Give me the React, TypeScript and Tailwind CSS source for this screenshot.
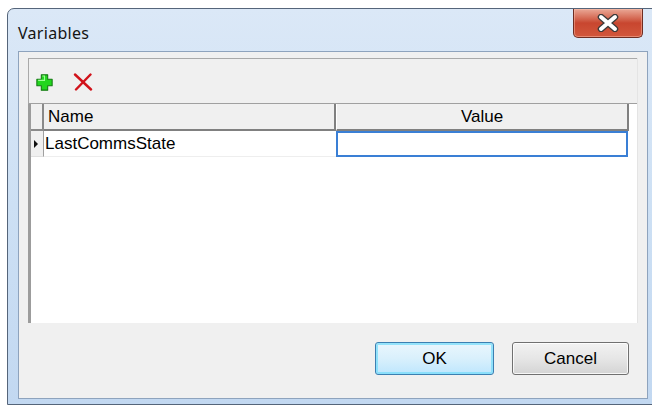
import React from "react";

function AddIcon() {
  return (
    <svg width="17" height="17" viewBox="0 0 16 16">
      <path
        d="M5 0.8h6v4.2h4.2v6h-4.2v4.2h-6v-4.2h-4.2v-6h4.2z"
        fill="#22d61e"
        stroke="#137a12"
        strokeWidth="1"
        strokeLinejoin="round"
      />
      <path d="M6 1.8h2v4.2H2" fill="none" stroke="#9dff96" strokeWidth="1" />
    </svg>
  );
}

function DeleteIcon() {
  return (
    <svg width="22" height="18" viewBox="0 0 22 18">
      <path d="M3 1.5 L19 16.5" stroke="#d1121a" strokeWidth="2.4" strokeLinecap="round" />
      <path d="M18.5 1.5 L4 16.5" stroke="#d1121a" strokeWidth="2.4" strokeLinecap="round" />
    </svg>
  );
}

function CloseGlyph() {
  return (
    <svg width="24" height="18" viewBox="0 0 24 18">
      <path d="M5 3 L19 15 M19 3 L5 15" stroke="#3a3a3a" strokeWidth="6.5" strokeLinecap="round" />
      <path d="M5 3 L19 15 M19 3 L5 15" stroke="#ffffff" strokeWidth="4" strokeLinecap="round" />
    </svg>
  );
}

function RowMarker() {
  return (
    <svg width="6" height="10" viewBox="0 0 6 10">
      <path d="M1 1 L5 5 L1 9 Z" fill="#111" />
    </svg>
  );
}

export default function App() {
  const gridFont = { fontFamily: '"Liberation Sans", Arial, sans-serif' };
  return (
    <div className="w-[652px] h-[405px] bg-white overflow-hidden pl-[7px] pt-[8px]">
      {/* dialog window */}
      <div className="relative w-[652px] h-[397px] flex flex-col border border-[#55657a] rounded-t-[7px] bg-gradient-to-b from-[#dbe8f7] via-[#cde0f4] to-[#c2d8f1]">
        {/* title bar */}
        <div className="h-[42px] shrink-0 flex items-center pl-[10px] pt-[6px]">
          <span
            className="text-[16px] text-[#141414] tracking-[0.3px]"
            style={{ fontFamily: '"Noto Sans", "Open Sans", sans-serif' }}
          >
            Variables
          </span>
        </div>

        {/* close button */}
        <div className="absolute left-[565px] top-0 w-[70px] h-[29px] rounded-b-[5px] border border-t-0 border-[#6e2d22] bg-gradient-to-b from-[#e9a796] via-[#c8462f] to-[#d2573c] flex items-center justify-center shadow-[inset_0_0_0_1px_rgba(255,200,180,0.45)]">
          <CloseGlyph />
        </div>

        {/* frame + client area */}
        <div className="flex-1 flex pl-[10px] pb-[5px] min-h-0">
          <div className="w-[630px] h-full border border-[#8ea3bd] bg-[#f0f0f0] flex flex-col">
            {/* grid control */}
            <div className="ml-[9px] mt-[6px] w-[610px] h-[265px] flex flex-col border-r border-[#e4e4e4]">
              {/* toolbar */}
              <div className="h-[46px] shrink-0 border-t border-l border-[#a9a9a9] border-b border-b-[#a0a0a0] bg-[#f0f0f0] flex items-center pl-[7px] gap-[19px] pt-[2px]">
                <AddIcon />
                <DeleteIcon />
              </div>

              {/* table */}
              <div className="flex-1 bg-white border-l-[3px] border-[#9c9c9c] flex flex-col" style={gridFont}>
                {/* header row */}
                <div className="h-[27px] flex shrink-0">
                  <div className="w-[13px] bg-[#f0f0f0] border-r-2 border-b-2 border-[#8a8a8a]" />
                  <div className="w-[292px] bg-[#f0f0f0] border-r-2 border-b-2 border-[#808080] flex items-end pl-[4px] pb-[2px]">
                    <span className="text-[17px] leading-[20px] text-black">Name</span>
                  </div>
                  <div className="w-[293px] bg-[#f0f0f0] border-r-2 border-b-2 border-[#808080] border-l border-l-white flex items-end justify-center pb-[2px]">
                    <span className="text-[17px] leading-[20px] text-black">Value</span>
                  </div>
                </div>

                {/* data row */}
                <div className="h-[26px] flex shrink-0">
                  <div className="w-[13px] bg-[#f0f0f0] border-r border-[#a0a0a0] border-b border-b-[#e0e0e0] flex items-center pl-[2px]">
                    <RowMarker />
                  </div>
                  <div className="w-[292px] border-b border-[#eeeeee] flex items-center pl-[1px]">
                    <span className="text-[17px] leading-[20px] text-black">LastCommsState</span>
                  </div>
                  <div className="w-[292px] border-2 border-[#3a7fd5]" />
                </div>
              </div>
            </div>

            {/* buttons */}
            <div className="flex justify-end gap-[18px] pr-[18px] mt-[19px]" style={gridFont}>
              <button className="w-[119px] h-[33px] rounded-[3px] border border-[#3c7fb1] bg-gradient-to-b from-[#eaf6fd] via-[#d9f0fc] to-[#bee6fd] shadow-[inset_0_0_0_2px_rgba(120,220,250,0.75)] text-[17px] text-black">
                OK
              </button>
              <button className="w-[117px] h-[33px] rounded-[3px] border border-[#707070] bg-gradient-to-b from-[#f2f2f2] via-[#e6e6e6] to-[#d4d4d4] shadow-[inset_0_0_0_1px_rgba(255,255,255,0.8)] text-[17px] text-black">
                Cancel
              </button>
            </div>
          </div>
        </div>
      </div>
    </div>
  );
}
